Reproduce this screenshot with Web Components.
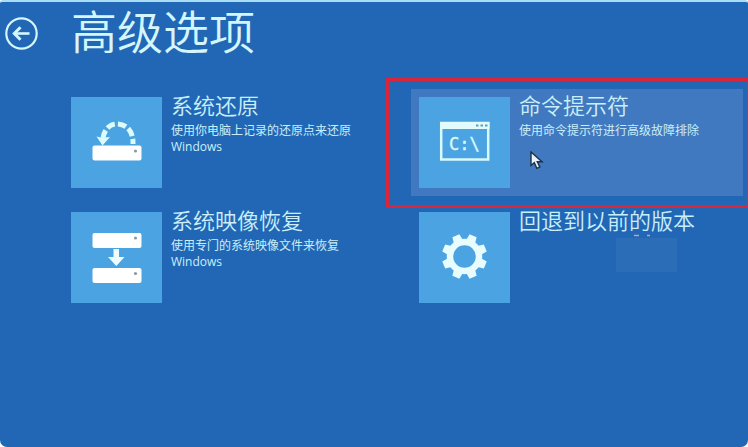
<!DOCTYPE html>
<html lang="zh-CN">
<head>
<meta charset="utf-8">
<title>高级选项</title>
<style>
	body {
		margin: 0;
		background: #fff;
		font-family: "Open Sans", "Noto Sans CJK SC", sans-serif;
		color: #c9effa;
		overflow: hidden;
	}
</style>
</head>
<body>

<template id="recovery-screen">
	<style>
		:host {
			display: block;
			box-sizing: border-box;
			min-height: 100vh;
			padding: 7px 5px 0;
			border-top: 2px solid #a9ddf6;
			border-radius: 3px 3px 7px 7px;
			background: #2267b5;
		}
		header {
			display: flex;
			align-items: center;
			gap: 33px;
			height: 48px;
		}
		h1 {
			margin: 0;
			font-family: "Liberation Sans", "Noto Sans CJK SC", sans-serif;
			font-size: 46px;
			font-weight: 350;
			line-height: 48px;
			color: #d4f6fd;
		}
		main {
			display: grid;
			grid-template-columns: 1fr 1fr;
			gap: 8px 16px;
			margin-top: 32px;
			padding-left: 58px;
		}
	</style>
	<header>
		<slot name="back"></slot>
		<h1><slot name="title"></slot></h1>
	</header>
	<main><slot></slot></main>
</template>

<template id="back-button">
	<style>
		:host {
			display: block;
		}
		button {
			display: block;
			padding: 0;
			border: 0;
			background: none;
			color: #d4f6fd;
		}
		svg {
			display: block;
			width: 33px;
			height: 33px;
		}
	</style>
	<button type="button" aria-label="返回">
		<svg viewBox="0 0 33 33" fill="none" stroke="currentColor">
			<circle cx="16.5" cy="16.5" r="15.2" stroke-width="2.2"/>
			<path d="M24.5 16.5H10" stroke-width="2.6"/>
			<path d="M15.5 10.3L9.3 16.5L15.5 22.7" stroke-width="3"/>
		</svg>
	</button>
</template>

<template id="option-tile">
	<style>
		:host {
			display: block;
			position: relative;
		}
		button {
			display: flex;
			align-items: flex-start;
			gap: 9px;
			box-sizing: border-box;
			width: 100%;
			padding: 8px;
			border: 0;
			background: none;
			font: inherit;
			color: inherit;
			text-align: left;
		}
		:host([selected]) button {
			background: #4079bf;
		}
		.icon {
			flex: none;
			width: 91px;
			height: 91px;
			background: #4ba3e1;
		}
		.text {
			display: block;
			min-width: 0;
		}
		.title, .desc {
			display: block;
		}
		.title {
			font-family: "Noto Sans CJK SC", sans-serif;
			font-size: 22px;
			font-weight: 350;
			line-height: 24px;
			margin-top: -5px;
			white-space: nowrap;
		}
		.desc {
			font-size: 12px;
			line-height: 16px;
			margin-top: 7px;
		}
		/* red frame around the option to pick */
		:host([marked])::after {
			content: "";
			position: absolute;
			inset: -11px -7px -12px -25px;
			border: 3px solid #d9263a;
			pointer-events: none;
			z-index: 1;
		}
	</style>
	<button type="button">
		<span class="icon"><slot name="icon"></slot></span>
		<span class="text">
			<span class="title"><slot name="title"></slot></span>
			<span class="desc"><slot></slot></span>
		</span>
	</button>
	<slot name="overlay"></slot>
</template>

<template id="option-icon">
	<style>
		:host, svg {
			display: block;
			width: 91px;
			height: 91px;
		}
		svg:not(.on) {
			display: none;
		}
		text {
			font-family: "DejaVu Sans Mono", monospace;
			font-size: 17px;
		}
	</style>
	<svg data-name="restore" viewBox="0 0 91 91">
		<rect x="21.5" y="48.5" width="49" height="15" rx="2" fill="#fff"/>
		<circle cx="64.5" cy="54" r="1.6" fill="#8d9a9f"/>
		<path d="M62 47C62.500 36 57 27.500 47 27C39 26.500 33.500 32 32 41" fill="none" stroke="#dcfbfb" stroke-width="5" stroke-dasharray="5 3 8.500 3 8.500 3 8.500 3 20"/>
		<path d="M25.500 39.500L30 40.500H34L39 40L31.500 48.500Z" fill="#dcfbfb"/>
	</svg>
	<svg data-name="image" viewBox="0 0 91 91">
		<g fill="#fff">
			<rect x="21.5" y="21" width="49" height="15" rx="2"/>
			<rect x="21.5" y="56" width="49" height="15" rx="2"/>
			<path d="M42.500 37H48V45H53.500L45.300 54L37 45H42.500Z" fill="#effcff"/>
		</g>
		<circle cx="64.5" cy="26" r="1.6" fill="#8d9a9f"/>
		<circle cx="64.5" cy="61.5" r="1.6" fill="#8d9a9f"/>
	</svg>
	<svg data-name="prompt" viewBox="0 0 91 91">
		<rect x="22.2" y="26" width="47" height="36.5" fill="none" stroke="#d7fafc" stroke-width="2.5"/>
		<rect x="21" y="25" width="49.5" height="7" fill="#e2fcfd"/>
		<path d="M57 28.500h2.500m2 0h2.500m2 0h2.500" stroke="#5c9fb8" stroke-width="2"/>
		<text x="30" y="53" fill="#d7fafc" stroke="#d7fafc" stroke-width=".4">C:\</text>
	</svg>
	<svg data-name="gear" viewBox="0 0 91 91">
		<g fill="#e8fcfd" transform="translate(45.5 44.5)">
			<circle r="14.5" fill="none" stroke="#e8fcfd" stroke-width="6.5"/>
			<path id="tooth" d="M-4.800 -16L-3.800 -22.500H3.800L4.800 -16Z" transform="rotate(22.5)"/>
			<use href="#tooth" transform="rotate(45)"/>
			<use href="#tooth" transform="rotate(90)"/>
			<use href="#tooth" transform="rotate(135)"/>
			<use href="#tooth" transform="rotate(180)"/>
			<use href="#tooth" transform="rotate(225)"/>
			<use href="#tooth" transform="rotate(270)"/>
			<use href="#tooth" transform="rotate(315)"/>
		</g>
	</svg>
</template>

<template id="mouse-pointer">
	<style>
		:host {
			position: absolute;
			left: 119px;
			top: 62px;
			pointer-events: none;
		}
		svg {
			display: block;
			width: 14px;
			height: 19px;
		}
	</style>
	<svg viewBox="0 0 14 19">
		<path d="M1 1V14.500L4.300 11.700L6.800 17.300L9.800 16L7.300 10.800H12Z" fill="#e8f4fa" stroke="#1c304d" stroke-width="1.4"/>
	</svg>
</template>

<template id="faint-patch">
	<style>
		:host {
			position: absolute;
			left: 205px;
			top: 30px;
			pointer-events: none;
		}
		svg {
			display: block;
			width: 61px;
			height: 38px;
		}
	</style>
	<svg viewBox="0 0 61 38">
		<path d="M0 4H61V38H0Z" fill="#2c6db8"/>
		<path d="M18 1.500h5m8 0h3" stroke="#b3a9b4" stroke-width="1.5"/>
	</svg>
</template>

<recovery-screen>
	<back-button slot="back"></back-button>
	<span slot="title">高级选项</span>

	<option-tile>
		<option-icon slot="icon" name="restore"></option-icon>
		<span slot="title">系统还原</span>
		使用你电脑上记录的还原点来还原<br>Windows
	</option-tile>
	<option-tile selected marked>
		<option-icon slot="icon" name="prompt"></option-icon>
		<span slot="title">命令提示符</span>
		使用命令提示符进行高级故障排除
		<mouse-pointer slot="overlay"></mouse-pointer>
	</option-tile>
	<option-tile>
		<option-icon slot="icon" name="image"></option-icon>
		<span slot="title">系统映像恢复</span>
		使用专门的系统映像文件来恢复<br>Windows
	</option-tile>
	<option-tile>
		<option-icon slot="icon" name="gear"></option-icon>
		<span slot="title">回退到以前的版本</span>
		<faint-patch slot="overlay"></faint-patch>
	</option-tile>
</recovery-screen>

<script>
	(function() {
		class TemplateElement extends HTMLElement {
			constructor() {
				super();

				const shadow = this.attachShadow({mode: 'open'});
				const template = document.getElementById(this.localName).content;
				shadow.appendChild(document.importNode(template, true));
			}
		}

		class OptionIcon extends TemplateElement {
			static get observedAttributes() {
				return ['name'];
			}

			// Shows only the drawing that the name attribute asks for
			attributeChangedCallback(attribute, oldVal, newVal) {
				this.shadowRoot.querySelectorAll('svg').forEach(function(svg) {
					svg.classList.toggle('on', svg.dataset.name === newVal);
				});
			}
		}

		customElements.define('recovery-screen', class extends TemplateElement {});
		customElements.define('back-button', class extends TemplateElement {});
		customElements.define('option-tile', class extends TemplateElement {});
		customElements.define('option-icon', OptionIcon);
		customElements.define('mouse-pointer', class extends TemplateElement {});
		customElements.define('faint-patch', class extends TemplateElement {});
	})();
</script>
</body>
</html>
